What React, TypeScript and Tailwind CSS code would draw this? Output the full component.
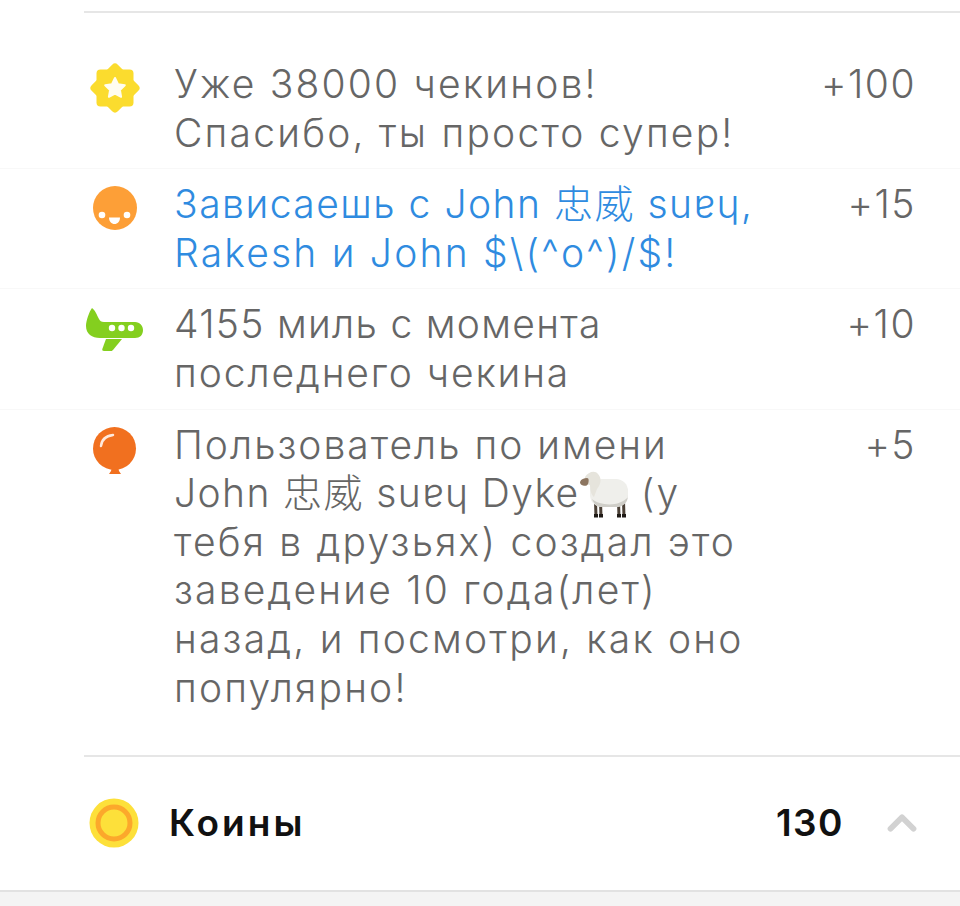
import React from 'react';
import { ChevronUp } from 'lucide-react';

const StarBadge = () => (
  <svg width="50" height="50" viewBox="0 0 50 50">
    <rect x="6.500" y="6.500" width="37" height="37" rx="4" fill="#fbdc2e" />
    <rect x="6.500" y="6.500" width="37" height="37" rx="4" fill="#fbdc2e" transform="rotate(45 25 25)" />
    <path
      d="M25 15l3 6.300 6.800.9-4.900 4.800 1.200 6.800-6.100-3.300-6.100 3.300 1.200-6.800-4.900-4.800 6.800-.9z"
      fill="#fffdf0"
      stroke="#fffdf0"
      strokeWidth="2"
      strokeLinejoin="round"
    />
  </svg>
);

const FaceBadge = () => (
  <svg width="44" height="44" viewBox="0 0 44 44">
    <circle cx="22" cy="22" r="22" fill="#fd9f37" />
    <circle cx="9" cy="29" r="3.300" fill="#fff" />
    <circle cx="34" cy="29" r="3.300" fill="#fff" />
    <path d="M16 31.500h11c0 4-2.500 6.500-5.500 6.500s-5.500-2.500-5.500-6.500z" fill="#fff" />
  </svg>
);

const PlaneBadge = () => (
  <svg width="58" height="46" viewBox="0 0 58 46">
    <path
      d="M6 0C9 2 11 7 13 11c1 2 2 3 5 3h31c5 0 8 4 8 8 0 5-3 8-8 8H14C6 30 0 26 0 18 0 13 3 4 6 0z"
      fill="#84cf1f"
    />
    <path d="M20 31h16l-9 11c-1 1-1.500 1-2 1h-7c-1.500 0-2-1-1.700-2z" fill="#84cf1f" />
    <circle cx="26" cy="20" r="3.200" fill="#fff" />
    <circle cx="35.500" cy="20" r="3.200" fill="#fff" />
    <circle cx="45" cy="20" r="3.200" fill="#fff" />
  </svg>
);

const BalloonBadge = () => (
  <svg width="44" height="48" viewBox="0 0 44 48">
    <path d="M19 40h6l1 4 2 3H16l2-3z" fill="#f1701f" />
    <circle cx="21.500" cy="21.500" r="21.500" fill="#f1701f" />
    <path d="M8 19c.5-6 4.500-10 12-11" fill="none" stroke="#ffe9dc" strokeWidth="2.500" strokeLinecap="round" />
  </svg>
);

const CoinBadge = () => (
  <svg width="50" height="50" viewBox="0 0 50 50">
    <circle cx="25" cy="25" r="24.500" fill="#fde03a" />
    <circle cx="25" cy="25" r="16" fill="#fde03a" stroke="#fca82b" strokeWidth="5" />
  </svg>
);

const Sheep = () => (
  <svg width="48" height="47" viewBox="0 0 48 47" className="inline-block align-[5px] -my-4">
    <path d="M14 30h3l.5 16h-3zM19 30h3l.5 16h-3zM37 30h3l.5 16h-3zM42 30h3l.5 16h-3z" fill="#4b4036" />
    <path d="M14 43h4v3.500h-4zM19 43h4v3.500h-4zM37 43h4v3.500h-4zM42 43h4v3.500h-4z" fill="#1f1a16" />
    <rect x="10" y="8" width="38" height="28" rx="12" fill="#efefeb" />
    <path d="M12 28c8 7 28 8 36-2v-2c0 8-5 12-12 12H22c-5 0-8-3-10-8z" fill="#cfcec8" />
    <path d="M5 6c3-5 10-7 13-3 4 4 3 10-1 15l-3 8c-3-2-4-8-4-12L5 13z" fill="#e6e4dc" />
    <path d="M0 11c1-3 4-4 7-4 2 0 2 3 1 6-1 2-3 2-5 1.500C1 14 0 13 0 11z" fill="#8c7560" />
  </svg>
);

const rows = [
  {
    id: 1,
    icon: <StarBadge />,
    nudge: 'mt-[3px]',
    points: '+100',
    text: (
      <>
        Уже 38000 чекинов!
        <br />
        Спасибо, ты просто супер!
      </>
    ),
  },
  {
    id: 2,
    icon: <FaceBadge />,
    nudge: 'mt-[3px]',
    points: '+15',
    blue: true,
    text: (
      <>
        <span className="tracking-[1.5px]">Зависаешь с John 忠威 suɐɥ,</span>
        <br />
        Rakesh и John $\(^o^)/$!
      </>
    ),
  },
  {
    id: 3,
    icon: <PlaneBadge />,
    nudge: 'mt-[6px]',
    points: '+10',
    text: (
      <>
        <span className="tracking-[1.3px]">4155 миль с момента</span>
        <br />
        <span className="tracking-[1.9px]">последнего чекина</span>
      </>
    ),
  },
  {
    id: 4,
    icon: <BalloonBadge />,
    nudge: 'mt-[5px]',
    points: '+5',
    text: (
      <>
        <span className="tracking-[2px]">Пользователь по имени</span>
        <br />
        <span className="tracking-[1.4px]">John 忠威 suɐɥ Dyke</span>
        <Sheep /> (у
        <br />
        тебя в друзьях) создал это
        <br />
        заведение 10 года(лет)
        <br />
        назад, и посмотри, как оно
        <br />
        популярно!
      </>
    ),
  },
];

export default function App() {
  return (
    <div className="w-[960px] h-[906px] overflow-hidden bg-white font-['Inter','Noto_Sans_CJK_SC',sans-serif] flex flex-col">
      <div className="ml-[84px] mt-[11px] h-[2px] bg-[#e6e6e6]" />
      <div className="h-[742px] pt-[47px] flex flex-col">
        {rows.map((row, i) => (
          <div
            key={row.id}
            className={`flex pr-[44px] ${i < 3 ? 'border-b border-[#f8f8f8] pb-[11px] mb-[11px]' : ''}`}
          >
            <div className="w-[174px] shrink-0 pl-[86px]">
              <div className={`w-[58px] h-[50px] flex items-center justify-center ${row.nudge}`}>{row.icon}</div>
            </div>
            <div
              className={`flex-1 text-[39px] leading-[48.6px] font-light tracking-[2.2px] whitespace-nowrap ${
                row.blue ? 'text-[#2f8be0]' : 'text-[#666666]'
              }`}
            >
              {row.text}
            </div>
            <div className="text-[39px] leading-[48.6px] font-light tracking-[1.5px] text-[#666666]">{row.points}</div>
          </div>
        ))}
      </div>
      <div className="ml-[84px] h-[2px] bg-[#e6e6e6]" />
      <div className="h-[133px] flex items-center pl-[89px] pr-[35px] pb-[1px]">
        <CoinBadge />
        <span className="ml-[30px] text-[37px] font-semibold tracking-[3px] text-[#111111]">Коины</span>
        <span className="ml-auto text-[37px] font-semibold tracking-[1.5px] text-[#111111]">130</span>
        <ChevronUp className="ml-[35px] -my-2 text-[#d2d2d2]" size={46} strokeWidth={3} />
      </div>
      <div className="h-[2px] bg-[#e2e2e2]" />
      <div className="flex-1 bg-[#f4f4f4]" />
    </div>
  );
}
